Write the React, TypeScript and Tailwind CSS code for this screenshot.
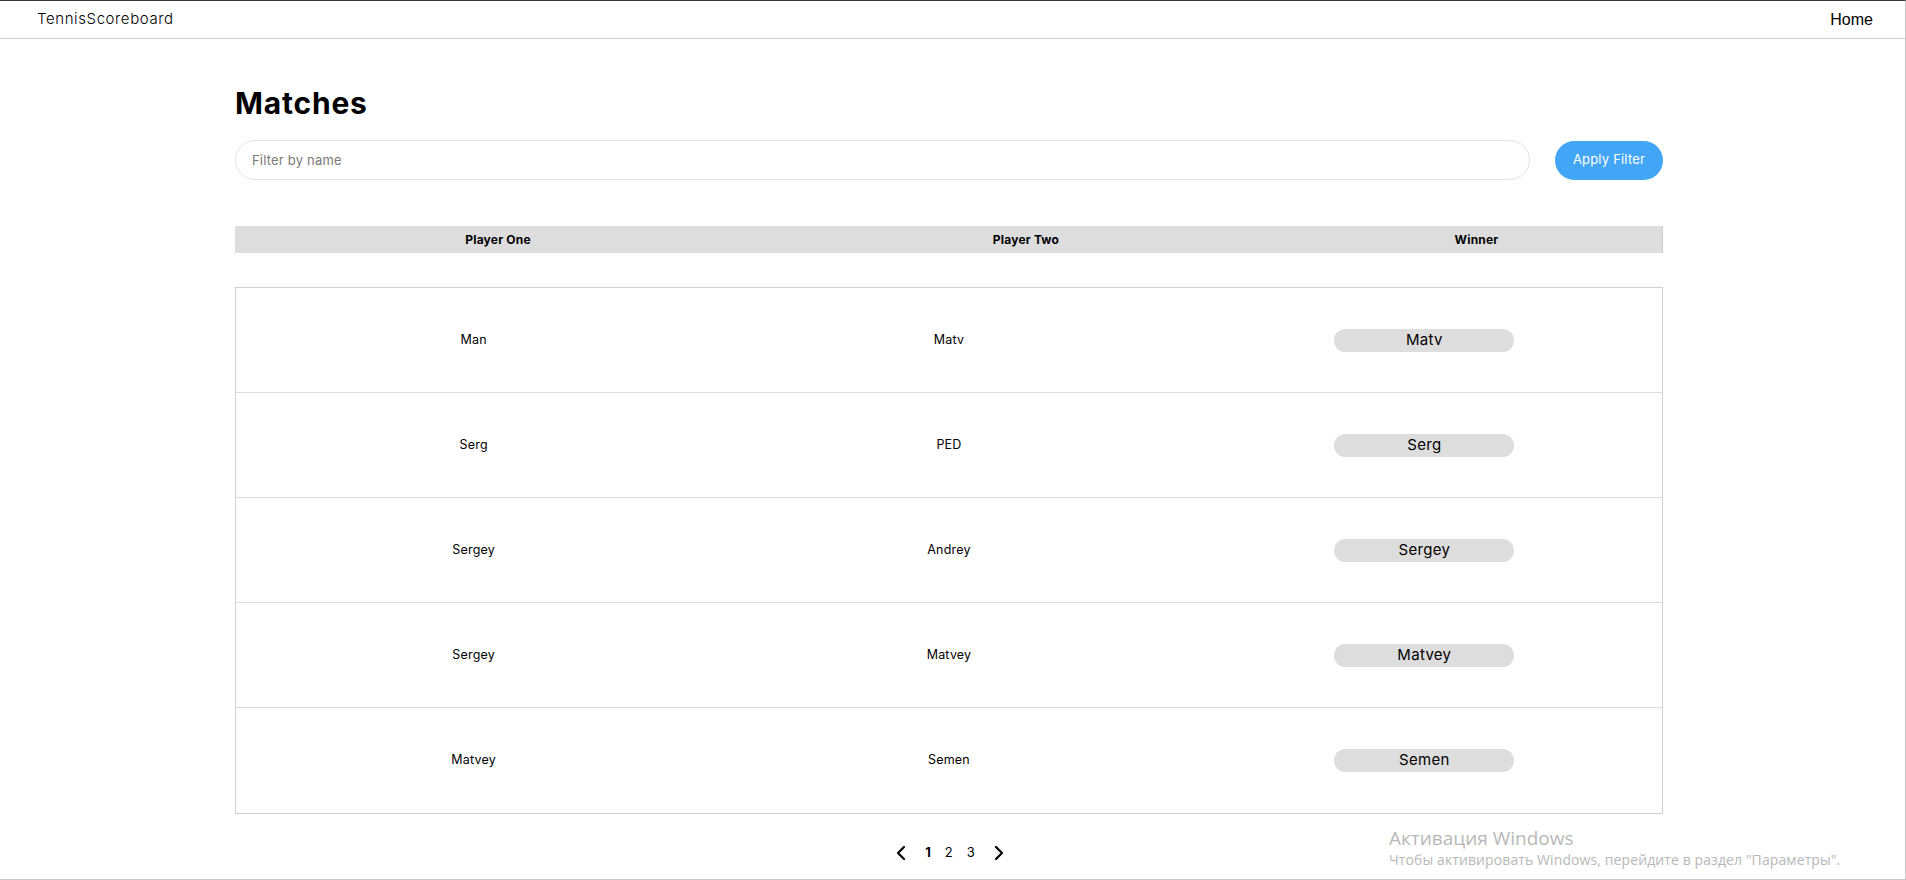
import React, { useState } from 'react';
import { ChevronLeft, ChevronRight } from 'lucide-react';

const matches = [
  { one: 'Man', two: 'Matv', winner: 'Matv' },
  { one: 'Serg', two: 'PED', winner: 'Serg' },
  { one: 'Sergey', two: 'Andrey', winner: 'Sergey' },
  { one: 'Sergey', two: 'Matvey', winner: 'Matvey' },
  { one: 'Matvey', two: 'Semen', winner: 'Semen' },
];

const App: React.FC = () => {
  const [filter, setFilter] = useState('');
  const [page, setPage] = useState(1);

  return (
    <div className="relative h-[880px] overflow-hidden bg-white border-t border-t-[#3a3a3a] border-r border-r-[#c8c8c8] border-b border-b-[#c8c8c8] font-['Inter',sans-serif] text-black">
      {/* Navbar */}
      <header className="flex items-center justify-between h-[38px] border-b border-[#cfcfcf] pl-[37px] pr-[32px]">
        <span className="text-[15px] font-light tracking-[0.6px]">TennisScoreboard</span>
        <span className="text-[16px] font-['Liberation_Sans',sans-serif]">Home</span>
      </header>

      <main className="ml-[235px] w-[1428px]">
        <h1 className="mt-[47px] text-[30px] font-bold leading-[34px] tracking-[0.8px]">Matches</h1>

        {/* Filter */}
        <div className="flex items-center mt-[20px] gap-[25px]">
          <input
            value={filter}
            onChange={(e) => setFilter(e.target.value)}
            placeholder="Filter by name"
            className="h-[40px] flex-1 rounded-full border border-[#e3e3e3] px-[16px] text-[13px] tracking-[0.2px] placeholder:text-[#7a7a7a] outline-none"
          />
          <button
            type="button"
            className="h-[39px] w-[108px] rounded-full bg-[#42a5f5] text-white text-[13px] tracking-[0.2px]"
          >
            Apply Filter
          </button>
        </div>

        {/* Table header */}
        <div className="mt-[46px] grid grid-cols-[526px_530px_1fr] h-[27px] items-center bg-[#dddddd] border-r border-[#cccccc] text-[12px] font-bold tracking-[0.2px]">
          <div className="text-center">Player One</div>
          <div className="text-center">Player Two</div>
          <div className="text-center">Winner</div>
        </div>

        {/* Table body */}
        <div className="mt-[34px] border border-[#d0d0d0]">
          {matches.map((m, i) => (
            <div
              key={i}
              className={`grid grid-cols-3 h-[105px] items-center text-[12.5px] tracking-[0.2px] ${i < matches.length - 1 ? 'border-b border-[#dcdcdc]' : ''}`}
            >
              <div className="text-center">{m.one}</div>
              <div className="text-center">{m.two}</div>
              <div className="flex justify-center">
                <span className="w-[180px] h-[23px] rounded-full bg-[#dddddd] flex items-center justify-center text-[15px] tracking-[0.3px]">
                  {m.winner}
                </span>
              </div>
            </div>
          ))}
        </div>

        {/* Pagination */}
        <div className="mt-[29px] flex items-center justify-center gap-[10px] text-[13px] h-[20px] pl-[2px]">
          <button type="button" onClick={() => setPage(Math.max(1, page - 1))}>
            <ChevronLeft size={24} strokeWidth={2.2} />
          </button>
          {[1, 2, 3].map((p) => (
            <button
              key={p}
              type="button"
              onClick={() => setPage(p)}
              className={`px-[2px] ${p === page ? 'font-bold' : ''}`}
            >
              {p}
            </button>
          ))}
          <button type="button" onClick={() => setPage(Math.min(3, page + 1))}>
            <ChevronRight size={24} strokeWidth={2.2} />
          </button>
        </div>
      </main>

      {/* Windows activation watermark */}
      <div className="absolute left-[1389px] top-[826px] text-[#b8b8b8] font-['Open_Sans',sans-serif] leading-tight">
        <div className="text-[19px]">Активация Windows</div>
        <div className="text-[14px] tracking-[0.1px]">Чтобы активировать Windows, перейдите в раздел "Параметры".</div>
      </div>
    </div>
  );
};

export default App;
